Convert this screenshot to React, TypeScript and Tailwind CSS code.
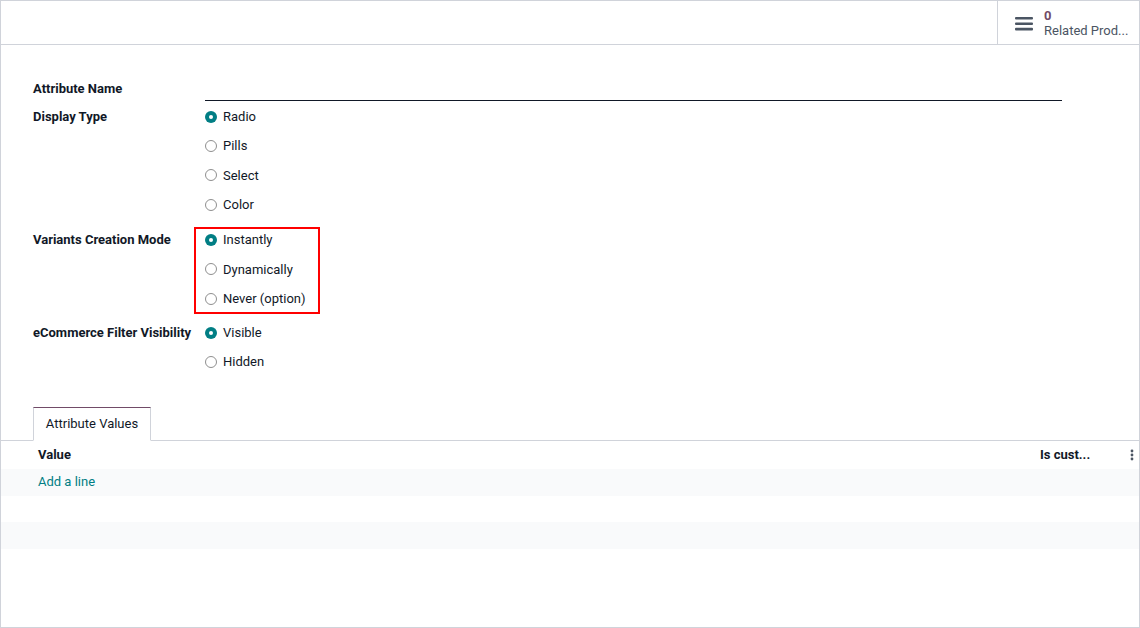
import React from "react"

const font = { fontFamily: "Roboto, 'Noto Sans', sans-serif" }

function Radio({ checked, label }: { checked?: boolean; label: string }) {
  return (
    <div className="flex h-[29.35px] items-center gap-[6px]">
      {checked ? (
        <span className="flex h-[12px] w-[12px] items-center justify-center rounded-full bg-[#017e84]">
          <span className="h-[4px] w-[4px] rounded-full bg-white" />
        </span>
      ) : (
        <span className="h-[12px] w-[12px] rounded-full border border-[#8f8f8f] bg-white" />
      )}
      <span>{label}</span>
    </div>
  )
}

function Field({ label, children, className = "" }: { label: string; children: React.ReactNode; className?: string }) {
  return (
    <div className={`flex ${className}`}>
      <div className="flex h-[29.35px] w-[172px] shrink-0 items-center font-bold">{label}</div>
      <div className="flex-1">{children}</div>
    </div>
  )
}

export default function App() {
  return (
    <div style={font} className="h-[628px] w-[1140px] bg-white text-[13px] text-[#111827]">
      <div className="flex h-[628px] w-[1140px] flex-col border border-[#d0d3da]">
        {/* button box */}
        <div className="flex h-[44px] shrink-0 justify-end border-b border-[#d0d3da]">
          <div className="flex w-[142px] items-center gap-[11px] border-l border-[#d0d3da] pl-[17px]">
            <svg width="18" height="15" viewBox="0 0 18 15" className="mt-[1px]">
              <rect x="0" y="1" width="18" height="2.6" rx="1" fill="#4b5563" />
              <rect x="0" y="6.4" width="18" height="2.6" rx="1" fill="#4b5563" />
              <rect x="0" y="11.8" width="18" height="2.6" rx="1" fill="#4b5563" />
            </svg>
            <div className="flex flex-col leading-[15px]">
              <span className="font-bold text-[#714b67]">0</span>
              <span className="text-[#4b5563]">Related Prod...</span>
            </div>
          </div>
        </div>

        {/* form */}
        <div className="px-[32px] pt-[32px]">
          <div className="flex h-[24px] items-center">
            <div className="w-[172px] shrink-0 font-bold">Attribute Name</div>
            <div className="h-full w-[857px] border-b border-[#111827]" />
          </div>

          <Field label="Display Type" className="mt-[1px]">
            <Radio checked label="Radio" />
            <Radio label="Pills" />
            <Radio label="Select" />
            <Radio label="Color" />
          </Field>

          <Field label="Variants Creation Mode" className="mt-[6px]">
            <div className="relative">
              <div className="pointer-events-none absolute left-[-11px] top-[2px] h-[87px] w-[126px] border-2 border-[#ff0000]" />
              <Radio checked label="Instantly" />
              <Radio label="Dynamically" />
              <Radio label="Never (option)" />
            </div>
          </Field>

          <Field label="eCommerce Filter Visibility" className="mt-[4.5px]">
            <Radio checked label="Visible" />
            <Radio label="Hidden" />
          </Field>
        </div>

        {/* notebook */}
        <div className="mt-[30px] flex border-b border-[#d0d3da] pl-[32px]">
          <div className="-mb-px flex h-[34px] w-[118px] items-center justify-center border border-b-white border-[#d0d3da] border-t-[#714b67] bg-white">
            Attribute Values
          </div>
        </div>

        <div className="flex h-[28px] items-center pl-[37px] pr-[5px] font-bold shadow-[0_3px_4px_-2px_rgba(0,0,0,0.06)]">
          <span className="flex-1">Value</span>
          <span className="w-[90px]">Is cust...</span>
          <svg width="4" height="12" viewBox="0 0 4 12">
            <circle cx="2" cy="2" r="1.4" fill="#4b5563" />
            <circle cx="2" cy="6" r="1.4" fill="#4b5563" />
            <circle cx="2" cy="10" r="1.4" fill="#4b5563" />
          </svg>
        </div>
        <div className="flex h-[27px] items-center bg-[#f9fafb] pl-[37px] text-[#017e84]">Add a line</div>
        <div className="h-[26px]" />
        <div className="h-[27px] bg-[#f9fafb]" />
      </div>
    </div>
  )
}
